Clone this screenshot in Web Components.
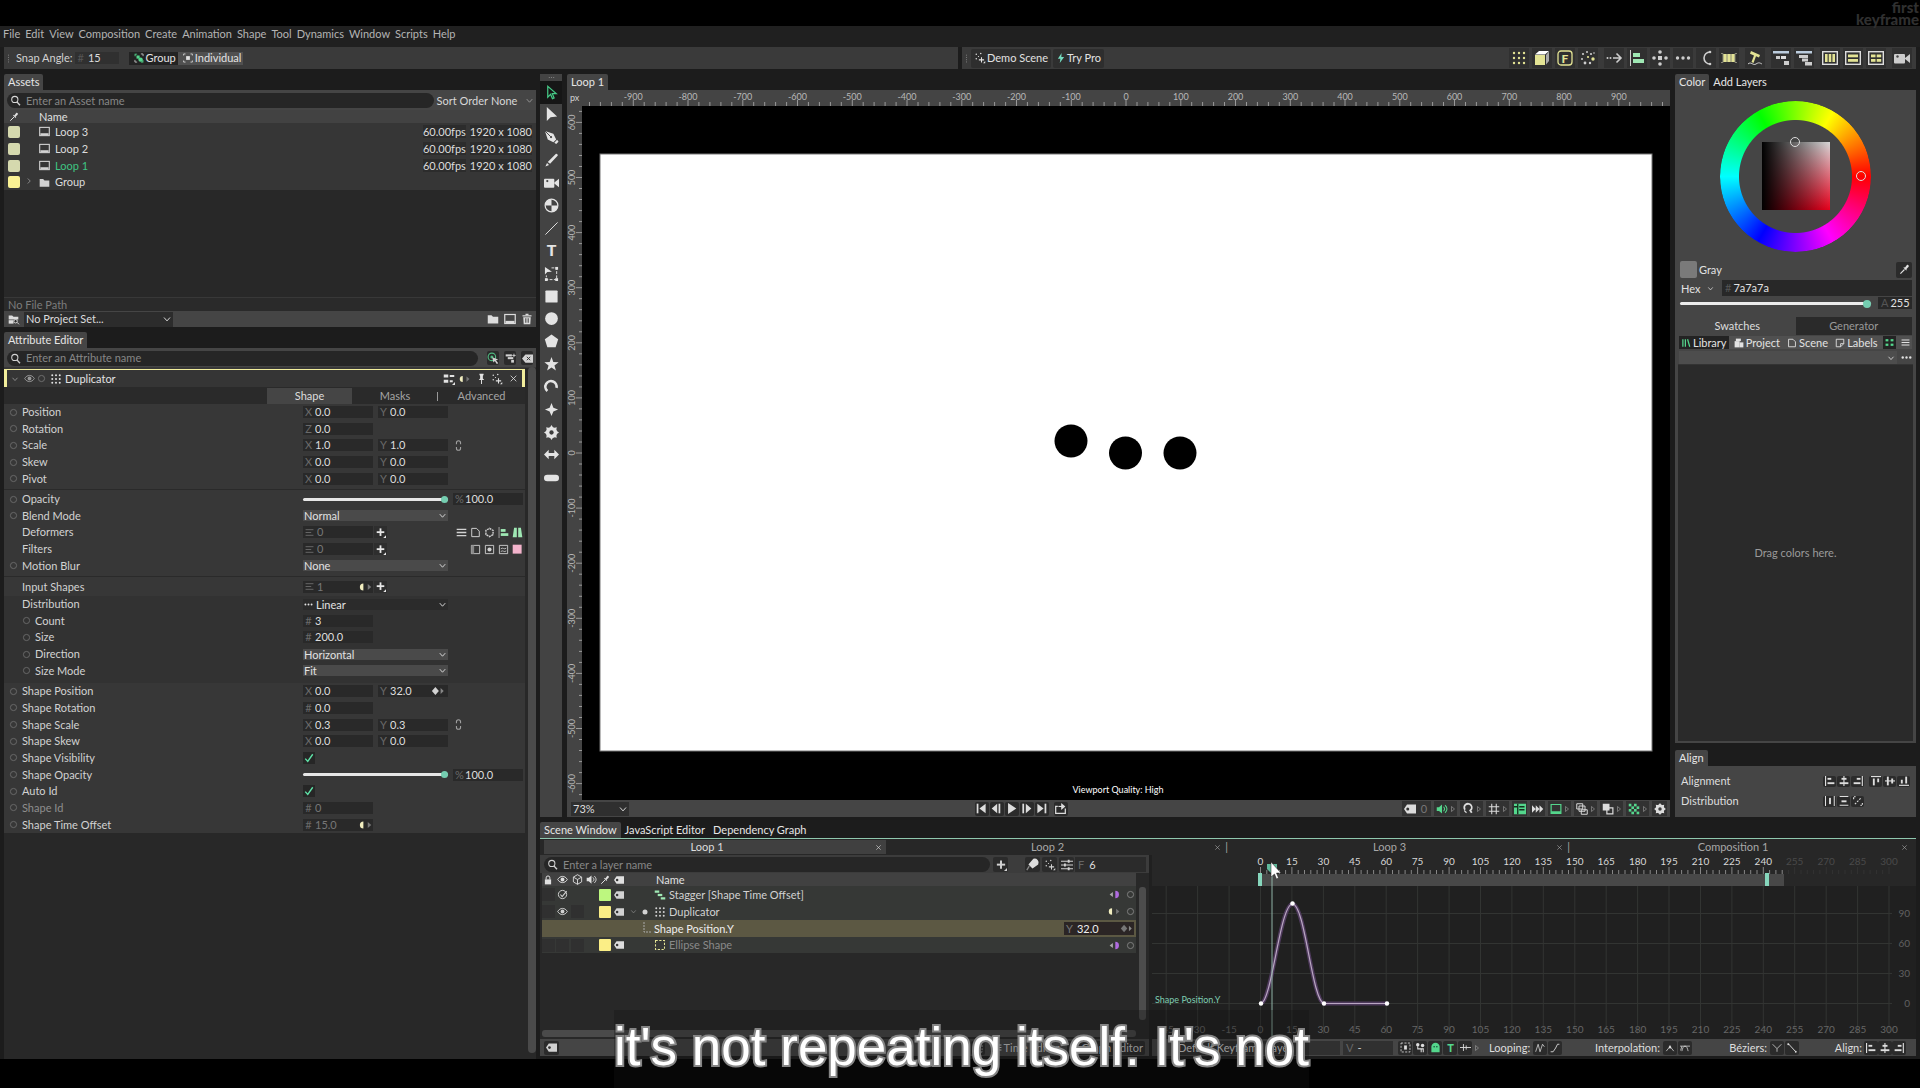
<!DOCTYPE html>
<html lang="en">
<head>
<meta charset="utf-8">
<title>Motion editor</title>
<style>
html,body{margin:0;height:100%;background:#000}
body{font:11px/14px Lato,"Noto Sans",sans-serif;color:#d2d2d2;overflow:hidden}
</style>
</head>
<body>
<mo-app></mo-app>
<script>
const BASE = `
*{box-sizing:border-box}
:host{display:block;box-sizing:border-box}
button,input,select{font:inherit;color:inherit;background:none;border:0;padding:0;margin:0;outline:0;min-width:0}
button{display:flex;align-items:center;justify-content:center}
select{appearance:none;width:100%}
input::placeholder{color:#868686;opacity:1}
.row{display:flex;align-items:center}
.grow{flex:1;min-width:0}
.search{display:flex;align-items:center;gap:5px;height:15px;border-radius:8px;background:#262626;padding:0 3px}
.search input{flex:1}
.sel{display:grid;align-items:center}
.sel>*{grid-area:1/1}
.sel mo-icon{justify-self:end;pointer-events:none}
.sq{background:#2b2b2b;border-radius:2px}
`;
function define(name, css, html){
  const tpl = document.createElement('template');
  tpl.innerHTML = `<style>${BASE}${css}</style>${html}`;
  customElements.define(name, class extends HTMLElement{
    constructor(){
      super();
      this.attachShadow({mode:'open'}).append(tpl.content.cloneNode(true));
    }
  });
}

/* ---------- icons, all on a 16 unit grid ---------- */
const S = (d,w=1.4,x='') => `<path d="${d}" fill="none" stroke="currentColor" stroke-width="${w}" ${x}/>`;
const P = (d,f='currentColor') => `<path d="${d}" fill="${f}"/>`;
const C = (x,y,r,f='currentColor') => `<circle cx="${x}" cy="${y}" r="${r}" fill="${f}"/>`;
const R = (x,y,w,h,f='currentColor',r=0) => `<rect x="${x}" y="${y}" width="${w}" height="${h}" rx="${r}" fill="${f}"/>`;
const grid9 = (f,r) => [3,8,13].map(y=>[3,8,13].map(x=>C(x,y,r,f)).join('')).join('');
const Y='#e3e394', G='#54d68c', M='#9fe8b4';
const poly=(n,r,r2,rot=-90)=>{let s='';const k=r2?n*2:n;for(let i=0;i<k;i++){const a=(rot+i*360/k)*Math.PI/180,q=r2&&i%2?r2:r;s+=(i?'L':'M')+(8+q*Math.cos(a)).toFixed(2)+' '+(8+q*Math.sin(a)).toFixed(2)}return s+'Z'};
const DROP = S('M2 14l6-6',1.6)+P('M6.500 5.500l4 4 1-1-1-1 3.500-3.500c1-1.500-1-3.500-2.500-2.500L8.500 5.500l-1-1z');
const CAM = R(0,4,11,9.500,'currentColor',1)+P('M11 8l5-4v9l-5-4z')+C(3.500,6.500,1.2,'#444');
const ICONS = {
  search:`<circle cx="7" cy="6.500" r="4.500" fill="none" stroke="currentColor" stroke-width="1.500"/>`+S('M10 10l4.500 5',2),
  drop:DROP,
  screen:`<rect x="1" y="2" width="14" height="12" fill="none" stroke="currentColor" stroke-width="1.600"/>`+R(2,10.500,12,3),
  folder:P('M1 3h5l2 2h7v9H1z'),
  project:P('M1 2h5l2 2h7v4H1z')+R(1,9,7,5)+`<circle cx="11" cy="10.500" r="2.500" fill="#2b2b2b" stroke="currentColor" stroke-width="1.400"/>`+S('M13 12l3 3',1.4),
  chev:S('M4 6l4 4.500L12 6',1.3),
  chevr:S('M6 4l4 4-4 4',1.3),
  trash:R(2,3,12,1.600)+R(6,1,4,2)+P('M3 5.500h10l-.600 9.500h-8.800z')+S('M6 7v6M8 7v6M10 7v6',.9,'style="stroke:#3a3a3a"'),
  select:S('M4 1.500v11.500l3-3 2 4.500 1.800-.800-2-4.500H13z',1.3),
  arrow:P('M3 0v15l4-4 7-1z'),
  pen:P('M1 1l9 3 3 6-3 3-6-3zM11 13.500l3-3 1.500 2-2.500 2.500z')+S('M1 1l6 6',1,'style="stroke:#444"')+C(7.500,7.500,1.200,'#444'),
  pencil:P('M4 9.500L12.500 1c1-.800 3 1 2 2L6.500 11.500zM1.500 14.500L3.200 10.600l2.200 2.200z'),
  camera:CAM,
  pivot:`<circle cx="8" cy="8" r="6.800" fill="none" stroke="currentColor" stroke-width="1.300"/>`+P('M8 8V1.200A6.800 6.800 0 0 0 1.200 8zM8 8v6.800A6.800 6.800 0 0 0 14.800 8z'),
  line:S('M1.500 14.500l13-13',1),
  type:`<text x="8" y="14" text-anchor="middle" font-family="Lato" font-weight="900" font-size="17" fill="currentColor">T</text>`,
  edit:P('M1 1v8l2.500-2.500 5-.500z')+S('M8 2h5.500v12.500H2.500V10',1,'stroke-dasharray="3 1.500"')+R(12,1,3,3)+R(1,13,3,3)+R(12,13,3,3),
  square:R(1.500,1.500,13,13,'currentColor',1), circle:C(8,8,6.800),
  penta:P(poly(5,7.500)), star:P(poly(5,8,3.300)), spark:P('M8 1l2 5 5 2-5 2-2 5-2-5-5-2 5-2z'),
  arc:S('M4.500 13.500A6 6 0 1 1 13.500 8.500',2.8,'transform="rotate(10 8 8)"'),
  gear:P(poly(8,8,5.300,-90))+`<circle cx="8" cy="8" r="4" fill="none" stroke="currentColor" stroke-width="4"/>`+C(8,8,2.300,'#3c3c3c'),
  harrow:P('M0 8l5-5v3.500h6V3l5 5-5 5V9.500H5V13z'),
  pill:R(0,5,16,7,'currentColor',3.5),
  group:P('M1 1h4v1.500H2.500V5H1zM15 15h-4v-1.500h2.500V11H15z',G)+R(4,4,5,5,G)+C(10.500,10.500,3.500,G)+S('M11 1.500h3.500V5M5 14.500H1.500V11',1.2),
  indiv:R(5,5,6,6)+S('M1 4V1.500h3M12 1.500h3V4M15 12v2.500h-3M4 14.500H1V12',1.3),
  demo:C(3,3,1)+C(9,2,1)+C(3,9,1)+C(6,6,.8)+S('M10 7v7M6.500 10.500h7',1.4)+P('M15 12v3h-3z'),
  bolt:P('M9 0L3 9h4l-1 7 7-9.500H8.500z','#74dcc0'),
  dots9y:grid9(Y,1.2), dots9:grid9('currentColor',1.3),
  cube:P('M1 5h10v10H1z',Y)+P('M1 4.500L5 1h10l-4 3.500z','#fff')+P('M12 5l3-3.500v9.500l-3 3.500z','#aaa'),
  fbox:`<rect x="1" y="1" width="14" height="14" rx="3" fill="none" stroke="${Y}" stroke-width="1.300"/><text x="8" y="12.500" text-anchor="middle" font-family="Lato" font-weight="900" font-size="12" fill="${Y}">F</text>`,
  scatter:C(3,4,1.1)+C(7,2,1)+C(11,4,1.1)+C(14,3,.8)+C(2,9,1)+C(8,7,1.1,Y)+C(13,9,1.7,Y)+C(5,13,1.4)+C(10,13,1.2),
  dotarrow:C(1.500,8,1)+C(4.500,8,1)+S('M7 8h8M10.500 3.500L15 8l-4.500 4.500',1.6),
  galign:R(1,0,1,16)+R(4,3,7,4,M)+R(4,9,11,4,M),
  cross:C(8,2,1.8)+C(8,14,1.8)+C(2,8,1.8)+C(14,8,1.8)+R(6,6,4,4),
  dots3:C(2.500,8,1.7)+C(8,8,1.7)+C(13.500,8,1.7),
  carc:S('M12 2a6 6 0 1 0 0 12',1.6)+C(12,2,1.3)+C(12,14,1.3),
  film:R(2,4,12,8,Y)+S('M0 3.500h2v9H0M16 3.500h-2v9h2M6 4v8M10 4v8',1,`style="stroke:#887"`),
  slant:P('M4 1l9 4-1 2.500-3-1.200L6.500 13 4.500 12 7 5.500 3 3.800z',Y)+S('M1 14c3-3 5 2 8 0s4-1 6 0',1),
  stag1:R(0,1,16,2.500,'#bcd')+R(3,6,4,3)+R(8,6,5,3,'#ddd')+R(11,11,5,4),
  stag2:R(0,1,16,2.500,'#bcd')+R(3,5,9,3)+R(6,8.500,6,3)+R(9,12,7,3.500),
  cols:`<rect x=".7" y="1.700" width="14.600" height="12.600" fill="none" stroke="#ddd" stroke-width="1.400"/>`+R(3,4,2.600,8,Y)+R(6.700,4,2.600,8,Y)+R(10.400,4,2.600,8,Y),
  rows:`<rect x=".7" y="1.700" width="14.600" height="12.600" fill="none" stroke="#ddd" stroke-width="1.400"/>`+R(3,4.500,10,2.800,Y)+R(3,9,10,2.800,Y),
  cells:`<rect x=".7" y="1.700" width="14.600" height="12.600" fill="none" stroke="#ddd" stroke-width="1.400"/>`+R(3,4.500,4.500,2.800,Y)+R(8.700,4.500,4.500,2.800,Y)+R(3,9,4.500,2.800,Y)+R(8.700,9,4.500,2.800,Y),
  eye:S('M1 8c3.500-6 10.500-6 14 0-3.500 6-10.500 6-14 0z',1.4)+C(8,8,2.8),
  eyecheck:`<circle cx="8" cy="8" r="6" fill="none" stroke="currentColor" stroke-width="1.400"/>`+S('M5 8l2.500 3L14 3',1.6),
  ring:`<circle cx="8" cy="8" r="5.500" fill="none" stroke="currentColor" stroke-width="1.500"/>`,
  dot:C(8,8,5),
  conn:R(1,2,6,4)+R(1,9,6,4)+S('M9 4h6M9 11h4',2.4)+P('M16 12v4h-4z'),
  keys:P('M5 4v8a4 4 0 0 1 0-8z','#f2eec0')+P('M10 4.500l4 3.500-4 3.500z','#777'),
  keyp:P('M6 5v6l-4-3z','#aaa')+P('M9 3.500a4.500 4.500 0 0 1 0 9z','#b06be0'),
  keyd:P('M5 3.500l4 4.500-4 4.500L1 8z')+P('M11 4.500l3.500 3.500-3.500 3.500z','#888'),
  pin:P('M5 1h6v2l-1 1v4l2 2H4l2-2V4L5 3z')+R(7.300,10,1.400,6),
  x:S('M3 3l10 10M13 3L3 13',1.4),
  link:S('M5 6V4a3 3 0 0 1 6 0v2M5 10v2a3 3 0 0 0 6 0v-2',1.6),
  list:S('M1 3h14M1 8h10M1 13h14',1.4), burger:S('M1 3.500h14M1 8h14M1 12.500h14',2),
  plus:R(6.700,2,2.600,11)+R(2.500,6.200,11,2.600)+P('M16 12v4h-4z'),
  page:S('M2.500 2h7l4 4v8h-11z',1.4), ring6:S(poly(6,6),2,'stroke-dasharray="3 1"'),
  ladder:P('M3 1h4v14H1zM9 1h4l2 14H9z',M),
  boxl:S('M2 2h12v12H2z',1.3)+R(2,2,4,12,'#888'), boxd:S('M2 2h12v12H2z',1.3)+C(8,8,3), boxw:S('M2 2h12v12H2z',1.3)+S('M4 7c3-3 5 2 8-1M4 11c3-3 5 2 8-1',1.2),
  pink:R(1,1,13,13,'#f3b3cb'),
  target:`<circle cx="6.500" cy="6.500" r="5" fill="none" stroke="#50b880" stroke-width="1.500"/><circle cx="6.500" cy="6.500" r="2" fill="#50b880"/>`+P('M7 7l8 3-3 1 3 4-2 1-2.500-4-2 2z'),
  filt:R(1,2,9,3)+R(4,6,8,3)+R(9,10,4,4)+S('M13 1v5M10.500 3.500h5',1.3),
  clear:P('M5 2h11v12H5L0 8z')+S('M7 5.500l5 5M12 5.500l-5 5',1.4,'style="stroke:#333"'),
  lock:R(3,7,10,8)+S('M5 7V4.500a3 3 0 0 1 6 0V7',1.6),
  cubeo:S('M8 1l6 3.500v7L8 15l-6-3.500v-7zM2 4.500L8 8l6-3.500M8 8v7',1.3),
  speaker:P('M1 5.500h3L8 2v12l-4-3.500H1z')+S('M10 5c2 2 2 4 0 6M12 3c3.500 3 3.500 7 0 10',1.4),
  tag:P('M4 2h12v12H4L0 8z')+C(5,8,2,'#333'),
  stagger:R(1,2,6,3,M)+R(5,6.500,6,3,M)+R(9,11,6,3,M),
  dash:`<rect x="2" y="2" width="12" height="12" fill="none" stroke="${Y}" stroke-width="1.400" stroke-dasharray="3 2"/>`,
  ball:P('M9 1a5 5 0 0 1 6 7l-7 5-5-5z','#ddd')+S('M4 10l-3 5',1.6,'style="stroke:#888"'),
  tune:S('M0 3h16M0 8h16M0 13h16',1.4)+R(9,1,2.500,4)+R(4,6,2.500,4)+R(9,11,2.500,4),
  first:R(1,1,2.500,14)+P('M14 1v14L5 8z'), prev:P('M9 1v14L1 8z')+R(11,1,2.500,14), play:P('M3 0l12 8-12 8z'),
  next:R(2,1,2.500,14)+P('M7 1v14l8-7z'), last:P('M2 1v14l9-7z')+R(12.500,1,2.500,14),
  loop:S('M4 5H1v10h14V8',1.8)+S('M5 5h6',1.6)+P('M9 0l6 5-6 5z'),
  magnet:S('M4 9A5 5 0 1 1 11 10l2 3',2.4)+S('M3 10l3 3',1.5),
  hash:S('M5 1v14M11 1v14M1 5h14M1 11h14',1.4),
  guides:R(0,1,16,14,G)+S('M5 1v14M7 9h7M7 5h7M0 5h5',1.8,'style="stroke:#14301f"'),
  ffwd:P('M0 3l5 5-5 5zM5 3l5 5-5 5zM10 3l5 5-5 5z'),
  gscreen:S('M1.500 2h13v12h-13z',1.6,`style="stroke:${G}"`)+R(1.500,11,13,3,G),
  stack:S('M1 1h8v7H1zM4 4h8v7H4zM7 9h8v6H7z',1.3), copy:R(1,1,9,9)+S('M6.500 6.500h8v8h-8z',1.6),
  checker:[0,1,2,3].map(r=>[0,1].map(c=>R(1+(c*2+r%2)*3.5,1+r*3.5,3.5,3.5,G)).join('')).join(''),
  tri:S('M5 3l6 5-6 5z',1.3), check:S('M2 9l4 4.500L14 2',2.2,'style="stroke:#5fe3a8"'),
  al:R(0,0,1.800,16)+R(4,3,6,3)+R(4,10,11,3), ac:R(7,0,1.800,16)+R(4,3,8,3)+R(1,10,14,3), ar:R(14,0,1.800,16)+R(6,3,6,3)+R(1,10,11,3),
  at:R(0,0,16,1.800)+R(3,4,3,11)+R(10,4,3,6), am:R(0,7,16,1.800)+R(3,1,3,14)+R(10,4,3,8), ab:R(0,14,16,1.800)+R(3,6,3,6)+R(10,1,3,11),
  dh:R(0,0,1.600,16)+R(6.500,3,3,10)+R(14,0,1.600,16), dv:R(1,0,14,1.600)+R(4,7,8,3)+R(1,14,14,1.600), dd:S('M1 5V1h3M15 11v4h-3M3 13l10-10',1.8,'stroke-dasharray="3 2"'),
  lib:S('M3 2v12M7 2v12M10.500 2l3.500 12',2,`style="stroke:${G}"`), bld:R(1,5,8,10)+R(9,7,6,8)+R(3,1,8,4), note:S('M2 2h12v7l-5 5H2zM9 14V9h5',1.4),
  g4:R(1,2,5,4,G)+R(10,2,5,4,G)+R(1,10,5,4,G)+R(10,10,5,4,G),
  frame:S('M1.500 1.500h13v13h-13z',1.2,'stroke-dasharray="3 2"')+R(6,5,4,6),
  knobs:C(4,4,2.500)+C(11,5,2.500)+S('M4 6v4h8v5M9 9v6',1.5), ghost:P('M2 15V7a6 6 0 0 1 12 0v8z',G)+C(6,7,1.1,'#143')+C(10,7,1.1,'#143'),
  gt:`<text x="8" y="14" text-anchor="middle" font-family="Lato" font-weight="900" font-size="16" fill="${G}">T</text>`,
  wave:S('M0 8h16M5 3v10M9 5v6',1.3), lp1:S('M1 14L5 2l3 12 4-12 3 4',1.2), lp2:S('M1 14h4l4-6 3-6h3',1.4),
  ip1:P('M8 3l2.500 4-2.500 2-2.500-2z')+S('M2 13l4-5M14 13l-4-5',1.2), ip2:S('M0 5h16M3 5l-2 7M8 5c-3 0-4 4-5 8M8 5c3 0 4 4 5 8',1.2),
  bz1:S('M1 2l7 7 7-7M8 9v5',1.2), bz2:S('M2 1l12 13',1.5)+C(2,2,1.5)+C(14,14,1.5),
  grip:[2,6,10,14].map(y=>C(8,y,1)).join(''), griph:[3,8,13].map(x=>C(x,8,1.4)).join('')
};
customElements.define('mo-icon', class extends HTMLElement{
  connectedCallback(){
    if(this.shadowRoot) return;
    const s = this.getAttribute('size') || 12;
    this.attachShadow({mode:'open'}).innerHTML =
      `<style>:host{display:inline-flex;flex:none;width:${s}px;height:${s}px}svg{display:block;width:100%;height:100%;overflow:visible}</style>
       <svg viewBox="0 0 16 16" aria-hidden="true">${ICONS[this.getAttribute('name')]||''}</svg>`;
  }
});
const I = (n,s=12,c='') => `<mo-icon name="${n}" size="${s}" ${c?`style="color:${c}"`:''}></mo-icon>`;
const B = (n,s=12,c='sq',label=n) => `<button class="${c}" aria-label="${label}">${I(n,s)}</button>`;

/* ---------- docked panel: tab strip + slotted body ---------- */
customElements.define('mo-panel', class extends HTMLElement{
  connectedCallback(){
    if(this.shadowRoot) return;
    const tabs=(this.getAttribute('tabs')||'').split('|');
    this.attachShadow({mode:'open'}).innerHTML=`<style>${BASE}
      :host{display:flex;flex-direction:column;min-height:0}
      nav{display:flex;height:16px;flex:none}
      button{padding:0 4px;height:16px;color:#e6e6e6;white-space:nowrap}
      button.on{background:#454545;border-radius:2px 2px 0 0}
      .body{flex:1;min-height:0;display:flex;flex-direction:column}</style>
      <nav>${tabs.map((t,i)=>`<button class="${i?'':'on'}">${t}</button>`).join('')}</nav>
      <div class="body"><slot></slot></div>`;
  }
});

define('mo-menubar', `:host{display:flex;align-items:center;gap:5px;height:21px;padding:0 3px 6px;background:#202020}
  button{color:#b4b4b4}`,
  'File|Edit|View|Composition|Create|Animation|Shape|Tool|Dynamics|Window|Scripts|Help'.split('|').map(t=>`<button>${t}</button>`).join(''));

define('mo-toolbars', `
  :host{display:flex;gap:4px;height:22px;padding:0 4px}
  .bar{flex:1;display:flex;align-items:center;background:#3a3a3a;min-width:0}
  .num{display:flex;align-items:center;width:44px;height:12px;margin-left:2px;padding-left:3px;gap:4px;background:#303030;color:#555}
  .num input{width:24px;color:#ddd}
  .mode{margin-left:10px;display:flex;height:13px}
  .mode button{gap:2px;padding:0 2px 0 5px;color:#e2e2e2;background:#505050}
  .mode button.on{background:#232323}
  .act{height:19px;gap:1px;padding:0 3px;background:#2e2e2e;color:#e2e2e2;border-radius:2px}
  .icons{display:flex;gap:6px;margin-left:auto;padding-right:4px;color:#cdcdcd}
  .set{display:flex;gap:3px}
  .set button{width:20px;height:20px;background:#303030}`,
  `<div class="bar">${I('grip',9,'#777')}<label for="snap" style="margin-left:3px">Snap Angle:</label>
     <span class="num">#<input id="snap" value="15"></span>
     <div class="mode"><button class="on">${I('group',10)}Group</button><button>${I('indiv',10)}Individual</button></div></div>
   <div class="bar">${I('grip',9,'#777')}<button class="act">${I('demo',12)}Demo Scene</button><span style="width:2px"></span><button class="act">${I('bolt',10)}Try Pro</button>
     <div class="icons">${[['dots9y','cube','fbox','scatter'],['dotarrow','galign','cross','dots3','carc','film'],['slant'],['stag1','stag2'],['cols','rows','cells'],['camera']]
       .map(g=>`<div class="set">${g.map(n=>B(n,16,'')).join('')}</div>`).join('')}</div></div>`);

const asset=(n,c,on)=>`<tr><td><i style="background:${c}"></i></td><td></td><td><span class="row">${I('screen',11)}<span class="nm" ${on?'style="color:#3fc482"':''}>${n}</span></span></td><td class="r"><b>60.00fps</b><b>1920 x 1080</b></td></tr>`;
define('mo-assets', `
  :host{display:flex;flex-direction:column;height:237px;background:#282828}
  .top{display:flex;align-items:center;background:#454545;height:20px;padding:1px 1px 0 3px;flex:none;color:#d8d8d8}
  .sel{width:44px}
  table{width:100%;border-collapse:collapse;table-layout:fixed}
  th,td{padding:0;text-align:left;font-weight:400}
  th{height:13px;background:#424242;color:#e0e0e0;line-height:13px}
  td{height:17px;background:#363636;line-height:16px}
  tr:last-child td{height:16px}
  td i{display:block;width:12px;height:12px;margin-left:4px;border-radius:2px}
  th mo-icon{display:block;margin-left:5px}
  .nm{margin-left:5px;color:#dcdcdc}
  .r{text-align:right;padding-right:4px} b{font-weight:400;background:#2c2c2c;color:#dcdcdc;margin-left:4px}
  .path{margin-top:auto;height:14px;line-height:14px;padding-left:4px;background:#2a2a2a;color:#7c7c7c;border-top:1px solid #383838}
  .foot{display:flex;align-items:center;height:16px;background:#454545;gap:5px;padding:0 3px 0 4px;color:#dcdcdc}
  .foot .sel{width:149px;background:#2c2c2c;height:15px}`,
  `<div class="top"><div class="search" style="flex:1">${I('search',11)}<input aria-label="Asset name" placeholder="Enter an Asset name"></div>
     <label for="so" style="margin:0 3px">Sort Order</label><span class="sel"><select id="so"><option>None</option></select>${I('chev',11,'#999')}</span></div>
   <table><colgroup><col style="width:20px"><col style="width:15px"><col><col style="width:120px"></colgroup>
   <thead><tr><th>${I('drop',10)}</th><th></th><th>Name</th><th></th></tr></thead><tbody>
   ${asset('Loop 3','#d5d9ae')}${asset('Loop 2','#d5d9ae')}${asset('Loop 1','#d5d9ae',1)}
   <tr><td><i style="background:#faf294"></i></td><td>${I('chevr',10,'#999')}</td><td><span class="row">${I('folder',11)}<span class="nm">Group</span></span></td><td></td></tr></tbody></table>
   <div class="path">No File Path</div>
   <div class="foot">${I('project',11)}<span class="sel"><select aria-label="Project" style="padding-left:2px"><option>No Project Set...</option></select>${I('chev',12)}</span><span class="grow"></span>${I('folder',12)}${I('screen',12)}${I('trash',12)}</div>`);

const num=(k,v,l,x='')=>`<span class="num ${x}"><i>${k}</i><input aria-label="${l}" value="${v}" ${x.includes('dim')?'disabled':''}></span>`;
const arow=(l,ctl,o={})=>`<div class="ar ${o.in?'in':''} ${o.dim?'dimrow':''}">${o.nodot?'<span></span>':I('ring',9,'#707070')}<span class="lb">${l}</span><div class="ct">${ctl}</div><div class="ex">${o.ex||''}</div></div>`;
const xy=(l,a,b,o)=>arow(l,num('X',a,l+' X')+num('Y',b,l+' Y'),o);
const pick=(l,v,c='')=>`<span class="sel pick ${c}"><select aria-label="${l}"><option>${v}</option></select>${I('chev',11)}</span>`;
const range=l=>`<input type="range" aria-label="${l}" min="0" max="100" value="100">`;
const box=l=>`<span class="ck"><input type="checkbox" aria-label="${l}" checked>${I('check',10)}</span>`;
const lst=(v,k='')=>`<span class="tight"><span class="num dim">${I('list',9)}<input aria-label="Count" value="${v}" disabled>${k}</span><button aria-label="Add">${I('plus',11,'#e8e8e8')}</button></span>`;
const lk=I('link',11,'#a0a0a0');
define('mo-attributes', `
  :host{display:flex;flex-direction:column;flex:1;min-height:0;background:#282828}
  .top{display:flex;align-items:center;gap:5px;background:#454545;height:20px;padding:1px 3px 0;flex:none;border-bottom:1px solid #383838}
  .top .search{flex:1;margin-right:4px}
  .top button{width:12px;height:14px}
  .main{flex:1;display:flex;min-height:0;gap:3px}
  .attrs{flex:1;background:#373737;align-self:flex-start}
  .bar{width:8px;background:#4a4a4a;border-radius:4px;margin:-1px 0 6px}
  .hd{display:flex;align-items:center;gap:2px;height:18px;margin-top:1px;border:solid #f2ee9c;border-width:1px 3px 0;background:#353535;padding:0 2px 0 3px;color:#e2e2e2}
  .hd button{width:14px;height:14px}
  .tabs{display:grid;grid-template-columns:1fr 85px 86px 87px;height:17px;padding-top:1px;background:#2a2a2a;color:#a4a4a4}
  .tabs .on{background:#454545;color:#ddd}
  .tabs .sep{background:linear-gradient(#999,#999) right center/1px 9px no-repeat}
  .g{display:grid;grid-auto-rows:1fr;background:#373737;box-sizing:content-box}
  .line{border-bottom:1px solid #2a2a2a;padding-bottom:2px;margin-bottom:1px}
  .deep{background:#323232;padding-bottom:4px;margin-top:1px}
  .ar{display:grid;grid-template-columns:18px 1fr 145px 5px 70px;align-items:center;padding-right:2px;height:100%}
  .ar>.ex{grid-column:5;display:flex;align-items:center;justify-content:flex-end;gap:3px;height:12px}
  .ar>mo-icon{justify-self:center}
  .in{grid-template-columns:31px 1fr 145px 5px 70px}
  .in>mo-icon{justify-self:end;margin-right:4px}
  .dimrow .lb{color:#8e8e8e}
  .ct{display:flex;align-items:center;gap:5px}
  .tight{display:flex;align-items:center;gap:1px}
  .num{display:flex;align-items:center;gap:3px;width:70px;height:12px;background:#292929;padding-left:2px}
  .num i{font-style:normal;color:#6a6a6a;width:7px;text-align:center}
  .num input{flex:1;width:20px;color:#dedede;height:12px}
  .dim,.dim input{color:#777}
  .pick{width:145px;height:11px;background:#4a4a4a;color:#e2e2e2;padding-left:1px}
  .pick select{height:11px;line-height:11px}
  .pick.dark{background:#2b2b2b}
  input[type=range]{appearance:none;width:145px;height:8px}
  input[type=range]::-webkit-slider-runnable-track{height:3px;background:#e6e6e6;border-radius:2px}
  input[type=range]::-webkit-slider-thumb{appearance:none;width:7px;height:7px;border-radius:50%;background:#74cdb0;margin-top:-2px}
  .ck{display:grid;place-items:center;width:12px;height:12px;background:#262626}
  .ck>*{grid-area:1/1} .ck input{appearance:none;width:12px;height:12px}
  .ct button{width:13px;height:12px;background:#2e2e2e}`,
  `<div class="top"><div class="search">${I('search',11)}<input aria-label="Attribute name" placeholder="Enter an Attribute name"></div>${B('target',12,'sq')}${B('filt',11,'sq')}${B('clear',11,'sq')}</div>
   <div class="main"><div class="attrs">
   <div class="hd">${I('chev',10,'#999')}<span></span>${I('eye',11,'#999')}${I('ring',9,'#777')}<span></span>${I('dots9',12)}<span style="margin-left:1px">Duplicator</span><span class="grow"></span>${B('conn',12,'')}${B('keys',12,'')}${B('pin',11,'')}${B('demo',12,'')}${B('x',9,'')}</div>
   <div class="tabs"><span></span><button class="on">Shape</button><button class="sep">Masks</button><button>Advanced</button></div>
   <div class="g line" style="height:83px">${xy('Position','0.0','0.0')}${arow('Rotation',num('Z','0.0','Rotation'))}${xy('Scale','1.0','1.0',{ex:lk+'<span class="grow"></span>'})}${xy('Skew','0.0','0.0')}${xy('Pivot','0.0','0.0')}</div>
   <div class="g line" style="height:83px">${arow('Opacity',range('Opacity'),{ex:num('%','100.0','Opacity')})}${arow('Blend Mode',pick('Blend Mode','Normal'))}
     ${arow('Deformers',lst(0),{nodot:1,ex:['burger','page','ring6','galign','ladder'].map(n=>I(n,11)).join('')})}
     ${arow('Filters',lst(0),{nodot:1,ex:['boxl','boxd','boxw','pink'].map(n=>I(n,11)).join('')})}${arow('Motion Blur',pick('Motion Blur','None'))}</div>
   <div class="g" style="height:17px">${arow('Input Shapes',lst(1,I('keys',14)),{nodot:1})}</div>
   <div class="g deep" style="height:83px">${arow('Distribution',`<span class="sel pick dark"><select aria-label="Distribution" style="padding-left:12px"><option>Linear</option></select>${I('chev',11)}<span style="display:flex">${I('dots3',9)}</span></span>`,{nodot:1})}
     ${arow('Count',num('#','3','Count'),{in:1})}${arow('Size',num('#','200.0','Size'),{in:1})}${arow('Direction',pick('Direction','Horizontal'),{in:1})}${arow('Size Mode',pick('Size Mode','Fit'),{in:1})}</div>
   <div class="g" style="height:150px">${arow('Shape Position',num('X','0.0','X')+`<span class="num"><i>Y</i><input aria-label="Y" value="32.0">${I('keyd',14)}<span></span></span>`)}
     ${arow('Shape Rotation',num('#','0.0','Shape Rotation'))}${xy('Shape Scale','0.3','0.3',{ex:lk+'<span class="grow"></span>'})}${xy('Shape Skew','0.0','0.0')}
     ${arow('Shape Visibility',box('Shape Visibility'))}${arow('Shape Opacity',range('Shape Opacity'),{ex:num('%','100.0','Shape Opacity')})}${arow('Auto Id',box('Auto Id'))}
     ${arow('Shape Id',num('#','0','Shape Id','dim'),{dim:1})}${arow('Shape Time Offset',`<span class="num dim"><i>#</i><input aria-label="Shape Time Offset" value="15.0" disabled>${I('keys',14)}</span>`)}</div>
   </div><div class="bar"></div></div>`);

define('mo-tools', `
  :host{display:flex;flex-direction:column;align-items:center;width:22px;background:#434343;color:#e4e4e4}
  .set{display:grid;grid-auto-rows:1fr;height:408px;width:22px}
  button{width:22px} .on{background:#161616;color:#45c986}`,
  `${I('griph',7,'#888')}<div class="set">${'select arrow pen pencil camera pivot line type edit square circle penta star arc spark gear harrow pill'.split(' ').map((n,i)=>`<button class="${i?'':'on'}" aria-label="${n}">${I(n,15)}</button>`).join('')}</div>`);

/* viewport drawing: 100 scene units take 54.75 px across and 55.1 px down */
function hRuler(){let s='';for(let k=-980;k<=980;k+=20){const x=544+k*.5475;s+=`<path d="M${x.toFixed(1)} 16v${k%100?-4:-6}"/>`;if(k%100==0)s+=`<text x="${x.toFixed(1)}" y="10">${k}</text>`}return s}
function vRuler(){let s='';for(let v=-620;v<=620;v+=20){const y=347+v*.551;s+=`<path d="M15 ${y.toFixed(1)}h${v%100?-3:-6}"/>`;if(v%100==0)s+=`<text transform="translate(8 ${y.toFixed(1)}) rotate(-90)">${v===0?0:-v}</text>`}return s}
define('mo-viewport', `
  :host{display:flex;flex-direction:column;min-width:0;min-height:0;flex:1}
  .stage{display:grid;grid-template:16px 1fr/15px 1fr;flex:1;min-height:0;background:#000}
  svg{display:block;width:100%;height:100%;min-height:0;min-width:0;overflow:hidden}
  .corner,.rul{background:#444} .corner{font-size:9px;line-height:16px;padding-left:3px;overflow:hidden}
  .rul{stroke:#999;stroke-width:1} .rul text{fill:#b8b8b8;stroke:none;font-size:9px;text-anchor:middle}
  .canvas text{font-size:9px;fill:#fff;text-anchor:middle}
  .status{display:flex;align-items:center;height:17px;background:#454545;padding:0 3px 0 4px;color:#dcdcdc}
  .sel{width:58px;height:14px;background:#2f2f2f;padding-left:2px}
  .status>*{flex:none}
  .status .l{flex:0 0 calc(37% - 2px)}
  .status .r{flex:1;display:flex;align-items:center;gap:3px;justify-content:flex-end}
  .mid{display:flex;gap:1px} .mid button{width:14px;height:14px} .mid button:last-child{margin-left:4px}
  .pair{display:flex;align-items:center;background:#323232}
  .pair button{width:15px;height:15px}`,
  `<div class="stage"><div class="corner">px</div>
    <svg class="rul" viewBox="0 0 1088 16" preserveAspectRatio="xMidYMax slice">${hRuler()}</svg>
    <svg class="rul" viewBox="0 0 15 694" preserveAspectRatio="xMaxYMid slice">${vRuler()}</svg>
    <svg class="canvas" viewBox="0 0 1088 694"><rect x="18" y="48" width="1052" height="597" fill="#fff" stroke="#777"/>
      <circle cx="489" cy="335" r="16.500"/><circle cx="543.500" cy="347" r="16.500"/><circle cx="598" cy="347" r="16.500"/>
      <text x="536" y="687">Viewport Quality: High</text></svg></div>
   <div class="status"><div class="l"><span class="sel"><select aria-label="Zoom"><option>73%</option></select>${I('chev',12)}</span></div>
    <div class="mid">${['first','prev','play','next','last','loop'].map(n=>B(n,11)).join('')}</div>
    <div class="r"><span class="pair"><button aria-label="Tag">${I('tag',12)}</button><span style="width:14px;color:#777;text-align:center">0</span></span>
    ${[['speaker',1,G],['magnet',1],['hash',1],['guides'],['ffwd'],['gscreen',1],['stack',1],['copy',1],['checker',1],['gear']].map(([n,t,c])=>`<span class="pair"><button aria-label="${n}">${I(n,12,c)}</button>${t?I('tri',8,'#999'):''}</span>`).join('')}</div></div>`);

define('mo-color', `
  :host{display:flex;flex-direction:column;flex:1;min-height:0;background:#454545;padding:10px 3px 2px 3px}
  .wheel{position:relative;display:grid;place-items:center;width:152px;height:152px;margin:0 auto;flex:none}
  .ring{grid-area:1/1;width:151px;height:151px;border-radius:50%;background:conic-gradient(from 90deg,#f00,#f0f,#00f,#0ff,#0f0,#ff0,#f00);-webkit-mask:radial-gradient(circle,transparent 56px,#000 57px)}
  .sv{grid-area:1/1;width:68px;height:68px;background:linear-gradient(90deg,#000,transparent),linear-gradient(#d8d8d8,#e8001c)}
  .mk{position:absolute;width:10px;height:10px;border:1px solid #ddd;border-radius:50%}
  .l{display:flex;align-items:center;color:#e2e2e2;flex:none}
  .sw{width:17px;height:17px;background:#7a7a7a;border-radius:2px;margin:0 2px}
  .f{display:flex;align-items:center;background:#282828;height:16px;padding-left:3px;color:#555} .f input{flex:1;width:20px;color:#e2e2e2;margin-left:2px}
  input[type=range]{appearance:none;flex:1;height:10px;margin:0 7px 0 2px}
  input[type=range]::-webkit-slider-runnable-track{height:3px;background:#ececec;border-radius:2px}
  input[type=range]::-webkit-slider-thumb{appearance:none;width:8px;height:8px;border-radius:50%;background:#74cdb0;margin-top:-2px}
  .tabs{display:grid;grid-template-columns:1fr 1fr;margin:8px 1px 0;height:18px;background:#2a2a2a;color:#999;flex:none} .tabs .on{background:#454545;color:#ddd}
  .src{height:13px;margin:1px 1px 0;justify-content:space-between;background:#505050}
  .src button{gap:2px;height:13px;padding:0 2px} .src .on{background:#232323}
  .sel{height:13px;background:#4d4d4d;margin:2px 1px 0;padding-right:1px}
  .bin{flex:1;display:grid;place-items:center;background:#2a2a2a;border-top:1px solid #333;color:#9a9a9a}`,
  `<div class="wheel"><div class="ring"></div><div class="sv"></div><i class="mk" style="left:70px;top:37px"></i><i class="mk" style="left:136px;top:71px"></i></div>
   <div class="l" style="margin-top:9px"><span class="sw"></span>Gray<span class="grow"></span><button class="sq" aria-label="Pick colour" style="width:16px;height:16px;margin-right:1px">${I('drop',11)}</button></div>
   <div class="l" style="margin-top:2px;gap:6px;padding:0 1px 0 3px"><span class="sel" style="width:35px;background:none;margin:0"><select aria-label="Colour model"><option>Hex</option></select>${I('chev',9)}</span><span class="f grow">#<input aria-label="Hex" value="7a7a7a"></span></div>
   <div class="l" style="margin-top:1px;padding-right:1px"><input type="range" aria-label="Alpha" max="255" value="255"><span class="f" style="width:34px;height:12px">A<input aria-label="Alpha value" value="255"></span></div>
   <div class="tabs"><button class="on">Swatches</button><button>Generator</button></div>
   <div class="l src"><button class="on">${I('lib',10)}Library</button><button>${I('bld',10)}Project</button><button>${I('page',10)}Scene</button><button>${I('note',10)}Labels</button><button class="on" aria-label="Grid">${I('g4',9)}</button><button aria-label="List">${I('burger',9)}</button></div>
   <div class="l"><span class="sel grow"><select aria-label="Palette"></select>${I('chev',10)}</span><button aria-label="More" style="margin:2px 1px 0 3px">${I('dots3',11)}</button></div>
   <div class="bin">Drag colors here.</div>`);

define('mo-align', `
  :host{background:#454545;height:51px;padding:5px 6px;color:#dedede}
  .l{display:flex;align-items:center;height:20px} .g{display:flex;gap:1px;width:41px} .g button{width:13px;height:11px} .g+.g{margin-left:5px}`,
  `<div class="l"><span class="grow">Alignment</span><span class="g">${['al','ac','ar'].map(n=>B(n,10)).join('')}</span><span class="g">${['at','am','ab'].map(n=>B(n,10)).join('')}</span></div>
   <div class="l"><span class="grow">Distribution</span><span class="g">${['dh','dv','dd'].map(n=>B(n,10)).join('')}</span><span class="g"></span></div>`);

define('mo-layers', `
  :host{display:flex;flex-direction:column;width:609px;background:#282828}
  .top{display:flex;align-items:center;height:18px;background:#3c3c3c;padding:1px 3px 0 4px;flex:none}
  .top .search{flex:1} .top button{width:15px;height:15px}
  .f{display:flex;align-items:center;width:71px;height:15px;background:#2b2b2b;color:#666;padding-left:3px;gap:5px} .f input{width:30px;color:#ddd}
  .mid{display:flex;flex:1;min-height:0;padding:0 3px 0 2px;gap:3px}
  .list{flex:1}
  table{width:100%;border-collapse:collapse;table-layout:fixed} th,td{padding:0;text-align:left;font-weight:400;white-space:nowrap}
  thead{background:#414141;color:#e0e0e0} th{height:13px;line-height:13px} td{height:17px;line-height:16px;background:#363836}
  tr:last-child td{height:16px}
  th mo-icon,td>mo-icon{display:block;margin-left:1px}
  td i{display:block;width:12px;height:12px;border-radius:1px}
  .hot td{background:#5c5843;color:#eee}
  .d{width:13px;height:13px;background:#303030}
  .v{display:flex;align-items:center;height:13px;width:70px;background:#2b2525;padding:0 1px 0 2px;gap:4px;color:#777;margin-left:auto;margin-right:2px} .v input{flex:1;color:#eee;width:20px}
  .e{display:flex;gap:5px;justify-content:flex-end;align-items:center;padding-right:1px}
  .bar{width:7px;background:#4c4c4c;border-radius:3px;margin:14px 0 10px}
  .hb{height:7px;background:#4a4a4a;border-radius:3px;margin:0 13px 2px 2px}
  .foot{display:flex;align-items:center;height:17px;background:#454545;padding:0 4px;gap:6px;color:#d2d2d2}
  .foot button{height:14px;gap:2px;padding:0 2px}`,
  `<div class="top"><div class="search">${I('search',11)}<input aria-label="Layer name" placeholder="Enter a layer name"></div><span style="width:3px"></span>${B('plus',12)}<span style="width:17px"></span>${B('ball',13)}<span style="width:2px"></span>${B('demo',12)}<span style="width:2px"></span>${B('tune',12)}<span style="width:1px"></span><label class="f">F<input value="6"></label></div>
   <div class="mid"><div class="list"><table><colgroup><col style="width:14px"><col style="width:15px"><col style="width:14px"><col style="width:14px"><col style="width:14px"><col style="width:15px"><col style="width:12px"><col style="width:14px"><col><col style="width:80px"></colgroup>
   <thead><tr><th>${I('lock',10)}</th><th>${I('eye',11)}</th><th>${I('cubeo',11)}</th><th>${I('speaker',11)}</th><th>${I('drop',10)}</th><th>${I('tag',10)}</th><th></th><th></th><th><span style="margin-left:2px">Name</span></th><th></th></tr></thead><tbody>
   <tr><td><div class="d"></div></td><td>${I('eyecheck',11)}</td><td></td><td></td><td><i style="background:#bdf77f"></i></td><td>${I('tag',10)}</td><td></td><td></td><td><span class="row">${I('stagger',12)}<span style="margin-left:3px">Stagger [Shape Time Offset]</span></span></td><td><span class="e">${I('keyp',13)}${I('ring',9,'#888')}</span></td></tr>
   <tr><td><div class="d"></div></td><td>${I('eye',11)}</td><td><div class="d"></div></td><td></td><td><i style="background:#fbee86"></i></td><td>${I('tag',10)}</td><td>${I('chev',9,'#888')}</td><td>${I('dot',8)}</td><td><span class="row">${I('dots9',12)}<span style="margin-left:3px">Duplicator</span></span></td><td><span class="e">${I('keys',13)}${I('ring',9,'#888')}</span></td></tr>
   <tr class="hot"><td></td><td></td><td></td><td></td><td></td><td></td><td></td><td><svg width="10" height="14" style="display:block;margin-left:3px" fill="none" stroke="#aaa" stroke-dasharray="2 1"><path d="M1 0v10h8"/></svg></td><td>Shape Position.Y</td><td><span class="v">Y<input aria-label="Shape Position.Y" value="32.0">${I('keyd',13)}</span></td></tr>
   <tr style="color:#8a8a8a"><td><div class="d"></div></td><td><div class="d"></div></td><td><div class="d"></div></td><td></td><td><i style="background:#fbee86"></i></td><td>${I('tag',10,'#ddd')}</td><td></td><td></td><td><span class="row">${I('dash',12)}<span style="margin-left:3px">Ellipse Shape</span></span></td><td><span class="e">${I('keyp',13)}${I('ring',9,'#888')}</span></td></tr>
   </tbody></table></div><div class="bar"></div></div>
   <div class="hb"></div>
   <div class="foot">${B('tag',11)}<span class="grow"></span>${B('frame',10)}<button>${I('burger',9)}Time Editor</button><button class="sq">${I('lp2',10)}Graph Editor</button></div>`);

/* graph: frame 0 at x=108.5, 15 frames = 31.43 px; value 0 at y=148, 30 units = 30 px */
function graph(){
  const X=f=>108.5+f*2.095; let s='';
  s+='<rect x="0" y="31" width="764" height="153" fill="#202020"/>';
  for(let f=-45;f<=300;f+=15) s+=`<path d="M${X(f).toFixed(1)} 31v148" stroke="#323432"/>`;
  for(const y of [58.5,88.5,118.5,148.5]) s+=`<path d="M0 ${y}h740" stroke="#323432"/>`;
  s+=`<rect x="108" y="19" width="524" height="12" fill="#484848"/>`;
  for(let f=0;f<=300;f+=3) s+=`<path d="M${X(f).toFixed(1)} 19v${f%15?-4:-7}" stroke="${f>249?'#333':'#888'}"/>`;
  for(let f=0;f<=300;f+=15) s+=`<text x="${X(f).toFixed(1)}" y="10" fill="${f>240?'#4a4a4a':'#d8d8d8'}">${f}</text>`;
  for(let f=-45;f<=300;f+=15) s+=`<text x="${X(f).toFixed(1)}" y="178" fill="#666">${f}</text>`;
  [90,60,30,0].forEach((v,i)=>s+=`<text x="758" y="${62+i*30}" style="text-anchor:end" fill="#606060">${v}</text>`);
  s+='<rect x="106" y="18" width="4" height="13" fill="#86d6bc"/><rect x="613" y="18" width="4" height="13" fill="#86d6bc"/>';
  const d='M109 148.500C120 146 128 49 140.500 49S160 146 172 148.500H235';
  s+=`<path d="${d}" fill="none" stroke="#4e3a5c" stroke-width="4"/><path d="${d}" fill="none" stroke="#b9a6c2" stroke-width="1.200"/>`;
  for(const [x,y] of [[109,148.5],[140.5,48.5],[172,148.5],[235,148.5]]) s+=`<circle cx="${x}" cy="${y}" r="2.200" fill="#fff"/>`;
  s+='<path d="M120 17v164" stroke="#8fb3a6"/><path d="M115 9h10v5l-5 5-5-5z" fill="#5fb89a"/><path d="M119 7v15l3.500-3 2 5 2-1-2-5h4.500z" fill="#fff" stroke="#222" stroke-width=".5"/>';
  s+='<text x="3" y="148" style="text-anchor:start;font-size:9px" fill="#7fcdb2">Shape Position.Y</text>';
  return s;
}
define('mo-graph', `
  :host{display:flex;flex-direction:column;flex:1;min-width:0;background:#272727}
  svg{display:block;width:100%;height:184px} text{font-size:10px;text-anchor:middle}
  .foot{display:flex;align-items:center;height:17px;background:#454545;padding-right:10px;gap:1px;color:#dedede;white-space:nowrap}
  .foot button{width:14px;height:14px}
  .sel{width:168px;height:14px;background:#303030;padding-left:6px;margin-left:20px}
  .f{display:flex;align-items:center;width:50px;height:14px;background:#303030;color:#666;padding-left:3px;gap:4px;margin:0 4px 0 2px} .f input{width:20px;color:#ccc}
  .s{display:flex;flex:1;align-items:center;justify-content:flex-end;gap:1px} .s span{margin-right:2px}`,
  `<svg viewBox="0 0 764 184" preserveAspectRatio="xMinYMin slice">${graph()}</svg>
   <div class="foot"><span class="sel"><select aria-label="Keyframe layer"><option>Default Keyframe Layer</option></select></span><label class="f">V<input value="-"></label>
   ${B('frame',11)}${B('knobs',11)}${B('ghost',11)}${B('gt',11)}${B('wave',11)}${I('tri',8,'#999')}
   <div class="s" style="flex:0 0 auto;margin-left:7px"><span>Looping:</span>${B('lp1',10)}${B('lp2',10)}</div>
   <div class="s"><span>Interpolation:</span>${B('ip1',10)}${B('ip2',10)}</div>
   <div class="s" style="flex:0 0 106px"><span>Béziers:</span>${B('bz1',10)}${B('bz2',10)}</div>
   <div class="s" style="flex:0 0 106px;gap:0"><span>Align:</span>${B('al',10)}${B('ac',10)}${B('ar',10)}</div></div>`);

define('mo-scene', `
  :host{height:218px}
  .tabs{display:grid;grid-template-columns:repeat(4,1fr);height:17px;padding:1px 4px 1px 4px;background:#272727;border-top:1px solid #8fc7ae;color:#a8a8a8;align-items:stretch}
  .tabs div{display:flex;align-items:center} .tabs .on{background:#404040;color:#ddd}
  .tabs button{flex:1} .tabs button.c{flex:0 0 16px}
  .sp{display:grid;place-items:center;width:3px;background:#202020}
  .b{display:flex;height:201px}`,
  `<div class="tabs">${['Loop 1','Loop 2','Loop 3','Composition 1'].map((t,i)=>`<div class="${i?'':'on'}"><button>${t}</button><button class="c" aria-label="Close ${t}">${I('x',7)}</button>${i==1||i==2?'<span>|</span>':''}</div>`).join('')}</div>
   <div class="b"><mo-layers></mo-layers><div class="sp">${I('grip',10,'#888')}</div><mo-graph></mo-graph></div>`);

define('mo-caption', `
  :host{position:absolute;left:614px;bottom:0;height:78px;padding-top:7px;background:rgba(20,20,20,.35);font:53px/60px "Liberation Sans",Arial,sans-serif;color:#fff;white-space:nowrap;-webkit-text-stroke:4px #858585;paint-order:stroke fill}`,
  `<slot></slot>`);

define('mo-app', `
  :host{position:relative;display:flex;flex-direction:column;height:100vh;padding:26px 0 29px;background:#000}
  .logo{position:absolute;right:1px;top:1px;text-align:right;font:900 15px/12px Lato,sans-serif;color:#303030}
  .app{flex:1;min-height:0;display:flex;flex-direction:column;background:#1c1c1c}
  .main{flex:1;min-height:0;display:flex;gap:4px;padding:5px 4px 0}
  .left{width:532px;flex:none;display:flex;flex-direction:column;gap:5px}
  .left mo-panel:last-child{flex:1}
  .right{flex:1;min-width:0;display:flex;flex-direction:column;gap:5px;padding-bottom:3px}
  .up{flex:1;min-height:0;display:flex;gap:5px}
  .up>mo-panel{flex:1;min-width:0}
  .dock{width:241px;flex:none;display:flex;flex-direction:column;gap:7px} .dock mo-panel:first-child{flex:1}`,
  `<div class="logo">first<br>keyframe</div>
   <div class="app"><mo-menubar></mo-menubar><mo-toolbars></mo-toolbars>
   <div class="main"><div class="left"><mo-panel tabs="Assets"><mo-assets></mo-assets></mo-panel><mo-panel tabs="Attribute Editor"><mo-attributes></mo-attributes></mo-panel></div>
   <div class="right"><div class="up"><mo-tools></mo-tools><mo-panel tabs="Loop 1"><mo-viewport></mo-viewport></mo-panel>
     <div class="dock"><mo-panel tabs="Color|Add Layers"><mo-color></mo-color></mo-panel><mo-panel tabs="Align"><mo-align></mo-align></mo-panel></div></div>
     <mo-panel tabs="Scene Window|JavaScript Editor|Dependency Graph"><mo-scene></mo-scene></mo-panel></div></div></div>
   <mo-caption>it's not repeating itself. It's not</mo-caption>`);
</script>
</body>
</html>
